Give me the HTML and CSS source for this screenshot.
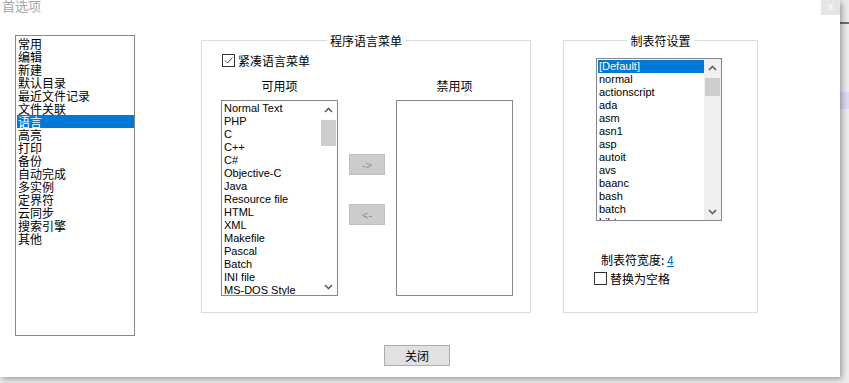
FILE: index.html
```html
<!DOCTYPE html>
<html lang="zh-CN">

<head>
    <meta charset="UTF-8">
    <title>首选项</title>
    <link rel="stylesheet" href="styles.css">
</head>

<body>

    <div class="dialog">
        <div class="titlebar">
            <span class="title">首选项</span>
            <span class="close-x">x</span>
        </div>

        <div class="main">
            <!-- category list -->
            <ul class="categories">
                <li>常用</li>
                <li>编辑</li>
                <li>新建</li>
                <li>默认目录</li>
                <li>最近文件记录</li>
                <li>文件关联</li>
                <li class="selected">语言</li>
                <li>高亮</li>
                <li>打印</li>
                <li>备份</li>
                <li>自动完成</li>
                <li>多实例</li>
                <li>定界符</li>
                <li>云同步</li>
                <li>搜索引擎</li>
                <li>其他</li>
            </ul>

            <!-- language menu group -->
            <div class="group lang-group">
                <div class="group-title">程序语言菜单</div>
                <div class="check-row">
                    <span class="box"><svg width="11" height="11" viewBox="0 0 11 11"><polyline points="2,5.5 4.5,8 9.5,2.5" fill="none" stroke="#555" stroke-width="1"/></svg></span>
                    <span>紧凑语言菜单</span>
                </div>
                <div class="lang-lists">
                    <div class="lang-col">
                        <div class="col-label">可用项</div>
                        <div class="listbox">
                            <ul class="items">
                                <li>Normal Text</li>
                                <li>PHP</li>
                                <li>C</li>
                                <li>C++</li>
                                <li>C#</li>
                                <li>Objective-C</li>
                                <li>Java</li>
                                <li>Resource file</li>
                                <li>HTML</li>
                                <li>XML</li>
                                <li>Makefile</li>
                                <li>Pascal</li>
                                <li>Batch</li>
                                <li>INI file</li>
                                <li>MS-DOS Style</li>
                            </ul>
                            <div class="vscroll white">
                                <span class="arrow"><svg width="9" height="6" viewBox="0 0 9 6"><polyline points="1,5 4.5,1.5 8,5" fill="none" stroke="#606060" stroke-width="1.6"/></svg></span>
                                <span class="thumb avail-thumb"></span>
                                <span class="spacer"></span>
                                <span class="arrow"><svg width="9" height="6" viewBox="0 0 9 6"><polyline points="1,1 4.5,4.5 8,1" fill="none" stroke="#606060" stroke-width="1.6"/></svg></span>
                            </div>
                        </div>
                    </div>
                    <div class="move-buttons">
                        <button class="move">-&gt;</button>
                        <button class="move">&lt;-</button>
                    </div>
                    <div class="lang-col">
                        <div class="col-label">禁用项</div>
                        <div class="listbox"></div>
                    </div>
                </div>
            </div>

            <!-- tab settings group -->
            <div class="group tab-group">
                <div class="group-title">制表符设置</div>
                <div class="listbox tab-list">
                    <ul class="items">
                        <li class="selected">[Default]</li>
                        <li>normal</li>
                        <li>actionscript</li>
                        <li>ada</li>
                        <li>asm</li>
                        <li>asn1</li>
                        <li>asp</li>
                        <li>autoit</li>
                        <li>avs</li>
                        <li>baanc</li>
                        <li>bash</li>
                        <li>batch</li>
                        <li>bibtex</li>
                    </ul>
                    <div class="vscroll">
                        <span class="arrow"><svg width="9" height="6" viewBox="0 0 9 6"><polyline points="1,5 4.5,1.5 8,5" fill="none" stroke="#606060" stroke-width="1.6"/></svg></span>
                        <span class="thumb tab-thumb"></span>
                        <span class="spacer"></span>
                        <span class="arrow"><svg width="9" height="6" viewBox="0 0 9 6"><polyline points="1,1 4.5,4.5 8,1" fill="none" stroke="#606060" stroke-width="1.6"/></svg></span>
                    </div>
                </div>
                <div class="tab-width">制表符宽度: <a href="#">4</a></div>
                <div class="check-row replace-row">
                    <span class="box"></span>
                    <span>替换为空格</span>
                </div>
            </div>
        </div>

        <div class="footer">
            <button class="close-btn">关闭</button>
        </div>
    </div>

</body>

</html>
```

FILE: styles.css
```css
* {
    box-sizing: border-box;
}

body {
    margin: 0;
    width: 849px;
    height: 383px;
    overflow: hidden;
    font-family: "Noto Sans CJK SC", sans-serif;
    font-size: 12px;
    color: #000;
    background:
        linear-gradient(to bottom, transparent 22px, #707070 22px, #707070 24px, transparent 24px),
        linear-gradient(to bottom, transparent 92px, #dadaf3 92px, #dadaf3 109px, transparent 109px),
        #ececec;
}

.dialog {
    width: 840px;
    height: 377px;
    background-color: #fff;
    box-shadow: 2px 2px 6px rgba(0, 0, 0, 0.35);
    display: flex;
    flex-direction: column;
}

.titlebar {
    height: 35px;
    display: flex;
    justify-content: space-between;
    align-items: flex-start;
}

.title {
    font-size: 13px;
    line-height: 13px;
    padding-left: 2px;
    margin-top: -1px;
    color: #a6a6a6;
}

.close-x {
    width: 19px;
    height: 15px;
    background-color: #e5e5e5;
    color: #f7f7f7;
    font-family: "Liberation Sans", sans-serif;
    font-size: 11px;
    font-weight: bold;
    line-height: 13px;
    text-align: center;
}

.main {
    height: 301px;
    display: flex;
    align-items: flex-start;
    padding-left: 15px;
}

ul {
    list-style: none;
    margin: 0;
    padding: 0;
}

.categories {
    width: 120px;
    height: 301px;
    border: 1px solid #828790;
    padding: 1px 0 0 1px;
}

.categories li {
    height: 13px;
    line-height: 13px;
    padding-left: 1px;
}

.selected {
    background-color: #0078d7;
    color: #fff;
}

/* group boxes */
.group {
    border: 1px solid #dcdcdc;
    height: 273px;
    margin-top: 5px;
}

.group-title {
    width: fit-content;
    margin: -7px auto 0;
    padding: 0 3px;
    background-color: #fff;
    line-height: 14px;
}

.lang-group {
    width: 330px;
    margin-left: 66px;
}

.lang-group .check-row,
.lang-lists {
    margin-left: 20px;
}

.tab-group {
    width: 195px;
    margin-left: 32px;
}

.check-row {
    display: flex;
    align-items: center;
    gap: 3px;
    height: 13px;
    line-height: 13px;
}

.lang-group .check-row {
    margin-top: 6px;
}

.box {
    width: 13px;
    height: 13px;
    border: 1px solid #333;
    background-color: #fff;
    display: flex;
    align-items: center;
    justify-content: center;
}

.lang-lists {
    display: flex;
    margin-top: 12px;
    margin-left: 19px;
}

.lang-col {
    width: 117px;
}

.col-label {
    height: 21px;
    line-height: 14px;
    text-align: center;
}

.listbox {
    border: 1px solid #828790;
    height: 196px;
    display: flex;
    overflow: hidden;
    background-color: #fff;
}

.items {
    flex: 1;
    padding: 1px 0 0 1px;
    font-family: "Liberation Sans", sans-serif;
    font-size: 11px;
}

.items li {
    height: 13px;
    line-height: 13px;
    padding-left: 1px;
    white-space: nowrap;
}

.vscroll {
    width: 17px;
    background-color: #f0f0f0;
    display: flex;
    flex-direction: column;
    align-items: center;
}

.vscroll.white {
    background-color: #fff;
}

.arrow {
    height: 17px;
    display: flex;
    align-items: center;
    justify-content: center;
}

.thumb {
    width: 15px;
    background-color: #cdcdcd;
    margin-top: 2px;
}

.avail-thumb {
    height: 26px;
}

.tab-thumb {
    height: 18px;
}

.spacer {
    flex: 1;
}

.move-buttons {
    width: 36px;
    margin: 0 11px;
    padding-top: 75px;
    display: flex;
    flex-direction: column;
}

.move {
    height: 21px;
    padding: 0;
    background-color: #cccccc;
    border: 1px solid #bfbfbf;
    color: #8c8c8c;
    font-family: "Liberation Sans", sans-serif;
    font-size: 11px;
}

.move + .move {
    margin-top: 29px;
}

.tab-list {
    width: 126px;
    height: 163px;
    margin-top: 10px;
    margin-left: 32px;
}

.tab-width {
    margin-top: 32px;
    margin-left: 37px;
    line-height: 14px;
}

.tab-width a {
    color: #0066cc;
}

.replace-row {
    margin-top: 5px;
    margin-left: 30px;
}

.footer {
    display: flex;
    justify-content: center;
    padding-top: 9px;
}

.close-btn {
    width: 66px;
    height: 21px;
    margin-left: -6px;
    padding: 0;
    background-color: #e1e1e1;
    border: 1px solid #adadad;
    font-family: "Noto Sans CJK SC", sans-serif;
    font-size: 12px;
    color: #000;
}
```
